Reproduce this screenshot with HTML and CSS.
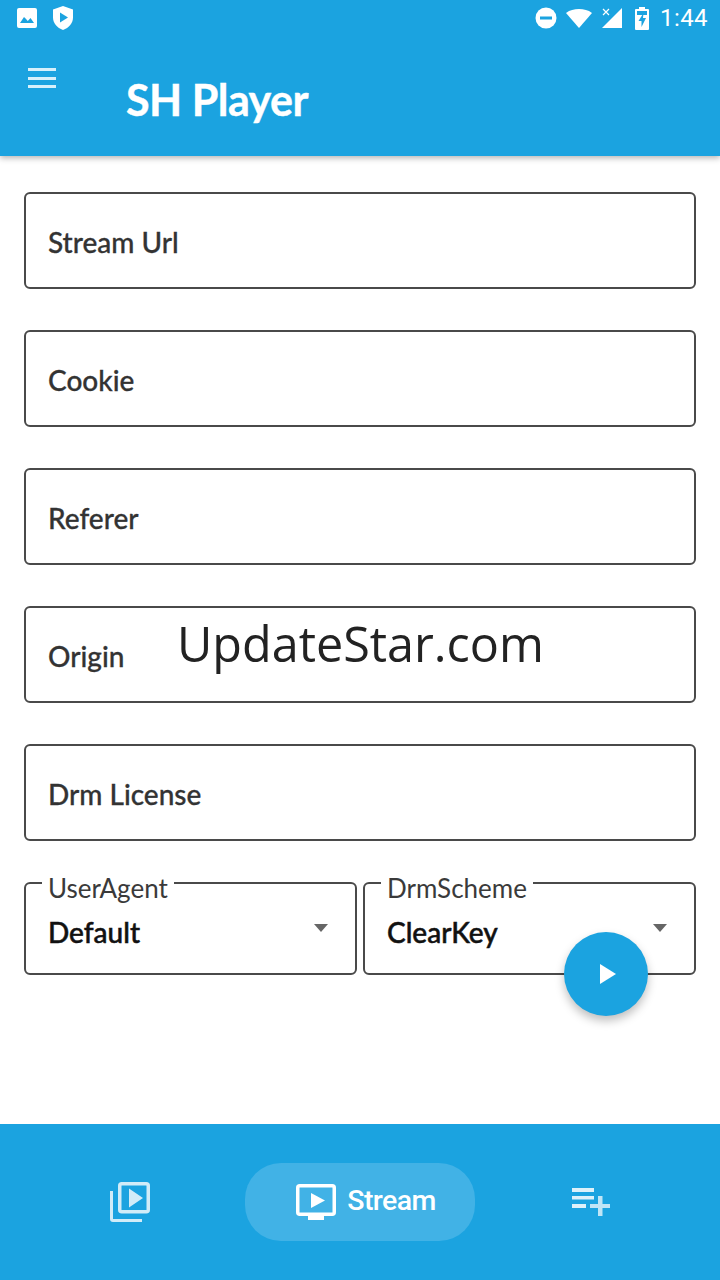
FILE: index.html
```html
<!DOCTYPE html>
<html lang="en">
<head>
<meta charset="utf-8">
<title>SH Player</title>
<link rel="stylesheet" href="styles.css">
</head>
<body>
<div class="app">
  <header class="appbar">
    <div class="status">
      <div class="status-left">
        <svg class="ic" width="20" height="20" viewBox="0 0 20 20"><path fill="#fff" fill-rule="evenodd" d="M2 0h16a2 2 0 0 1 2 2v16a2 2 0 0 1-2 2H2a2 2 0 0 1-2-2V2a2 2 0 0 1 2-2zM3 15h14l-3.500-5-2.700 3-2-2.200L7 9z"/></svg>
        <svg class="ic" width="20" height="24" viewBox="0 0 20 24"><path fill="#fff" d="M10 0l10 3.500v8c0 5.500-4 10.500-10 12.500C4 22 0 17 0 11.500v-8z"/><path fill="#1ba3e0" d="M7 6.500l8 5-8 5z"/></svg>
      </div>
      <div class="status-right">
        <svg width="22" height="22" viewBox="0 0 22 22"><circle cx="11" cy="11" r="10.500" fill="#fff"/><rect x="5" y="9.500" width="12" height="3" fill="#1ba3e0"/></svg>
        <svg class="wifi" width="26" height="19" viewBox="0 0 26 19"><path fill="#fff" d="M13 19L0 4C4 1 8 0 13 0s9 1 13 4z"/></svg>
        <svg class="signal" width="22" height="22" viewBox="0 0 22 22"><path fill="#fff" d="M21 1v20H1z"/><path stroke="#fff" stroke-width="1.200" d="M2 2l6 6M8 2L2 8"/></svg>
        <svg class="battery" width="14" height="23" viewBox="0 0 14 23"><path fill="#fff" d="M4 0h6v2h3a1 1 0 0 1 1 1v19a1 1 0 0 1-1 1H1a1 1 0 0 1-1-1V3a1 1 0 0 1 1-1h3z"/><path fill="#1ba3e0" d="M2 4h10v4H2z"/><path fill="#1ba3e0" d="M8.500 6L3.500 14h3v6l4.500-9H8z"/></svg>
        <span class="clock">1:44</span>
      </div>
    </div>
    <div class="toolbar">
      <div class="menu"><span></span><span></span><span></span></div>
      <h1 class="title">SH Player</h1>
    </div>
  </header>

  <main class="form">
    <div class="field"><span class="field-label">Stream Url</span></div>
    <div class="field"><span class="field-label">Cookie</span></div>
    <div class="field"><span class="field-label">Referer</span></div>
    <div class="field"><span class="field-label">Origin</span></div>
    <div class="field"><span class="field-label">Drm License</span></div>
    <div class="selects">
      <div class="select">
        <span class="legend">UserAgent</span>
        <span class="value">Default</span>
        <i class="caret"></i>
      </div>
      <div class="select">
        <span class="legend">DrmScheme</span>
        <span class="value">ClearKey</span>
        <i class="caret"></i>
      </div>
    </div>
    <div class="watermark">UpdateStar.com</div>
    <button class="fab" aria-label="Play"><svg width="18" height="20" viewBox="0 0 18 20"><path fill="#fff" d="M1 0l16 10-16 10z"/></svg></button>
  </main>

  <nav class="bottom">
    <div class="tab">
      <svg class="dim" width="40" height="40" viewBox="0 0 40 40" fill="none"><path stroke="#fff" stroke-width="3" d="M1.500 9v28a1.500 1.500 0 0 0 1.500 1.500h29"/><rect x="9.750" y="1.750" width="28.500" height="28" rx="2" stroke="#fff" stroke-width="3.500"/><path fill="#fff" d="M19 6.500l14 9.500-14 9.500z"/></svg>
    </div>
    <div class="pill">
      <svg width="40" height="36" viewBox="0 0 40 36" fill="none"><rect x="1.750" y="1.750" width="36.500" height="28.500" rx="2" stroke="#fff" stroke-width="3.500"/><path fill="#fff" d="M15 9l14 7.500-14 7.500z"/><rect x="12" y="31" width="16" height="5" fill="#fff"/></svg>
      <span class="pill-text">Stream</span>
    </div>
    <div class="tab tab-end">
      <svg class="dim2" width="38" height="28" viewBox="0 0 38 28"><path fill="#fff" d="M0 0h22v4H0zM0 8h22v3.500H0zM0 16h14v4H0z"/><path fill="#fff" opacity=".85" d="M26 8h4.500v8H38v4h-7.500v8H26v-8h-8v-4h8z"/></svg>
    </div>
  </nav>
</div>
</body>
</html>
```

FILE: styles.css
```css
* { box-sizing: border-box; }
html, body { margin: 0; padding: 0; }
body { background: #fff; font-family: "Lato", "Liberation Sans", sans-serif; }
.app { width: 720px; height: 1280px; display: flex; flex-direction: column; overflow: hidden; }

.appbar { height: 156px; background: #1ba3e0; color: #fff; box-shadow: 0 2px 6px rgba(0,0,0,.3); position: relative; z-index: 1; }
.status { height: 36px; display: flex; justify-content: space-between; align-items: center; padding: 0 12px 0 17px; }
.status-left { display: flex; align-items: center; gap: 16px; }
.status-right { display: flex; align-items: center; gap: 9px; }
.battery { margin-left: 3px; }
.clock { font-family: Roboto, sans-serif; font-size: 24px; letter-spacing: 0.4px; margin-left: 2px; }

.toolbar { display: flex; align-items: flex-start; padding: 32px 0 0 28px; }
.menu { width: 28px; display: flex; flex-direction: column; gap: 5.500px; }
.menu span { height: 3px; background: #d6f0fb; }
.title { margin: -3px 0 0 70px; font-size: 43px; line-height: 70px; font-weight: 700; letter-spacing: -0.5px; white-space: nowrap; -webkit-text-stroke: 0.4px #fff; }

.form { flex: 1; position: relative; padding: 36px 24px 0; display: flex; flex-direction: column; gap: 41px; }
.field { height: 97px; border: 2px solid #4a4a4a; border-radius: 6px; display: flex; align-items: center; padding: 2px 0 0 22px; }
.field-label { font-size: 28px; font-weight: 500; color: #333; -webkit-text-stroke: 0.3px #333; }

.selects { display: flex; gap: 6px; }
.select { flex: 1; height: 93px; border: 2px solid #4a4a4a; border-radius: 6px; position: relative; padding: 26px 22px 0; }
.legend { position: absolute; top: -11px; left: 16px; padding: 0 6px; background: #fff; font-size: 26px; line-height: 30px; color: #3a3a3a; }
.value { font-size: 28px; font-weight: 500; line-height: 44px; color: #111; -webkit-text-stroke: 0.5px #111; }
.caret { position: absolute; top: 40px; right: 27px; border-left: 7.500px solid transparent; border-right: 7.500px solid transparent; border-top: 8px solid #666; }

.watermark { position: absolute; left: 177px; top: 454px; font-family: "Open Sans", sans-serif; font-size: 48.500px; line-height: 66px; color: #222; }
.fab { position: absolute; left: 564px; top: 776px; width: 84px; height: 84px; border: 0; border-radius: 50%; background: #1ba3e0; display: flex; align-items: center; justify-content: center; padding: 0 0 0 4px; box-shadow: 0 5px 10px rgba(0,0,0,.25); }

.bottom { height: 156px; background: #1ba3e0; display: flex; align-items: center; justify-content: center; }
.tab { width: 230px; display: flex; justify-content: center; }
.tab-end { padding-left: 2px; }
.pill { width: 230px; height: 78px; border-radius: 36px; background: #41b2e6; display: flex; align-items: center; justify-content: center; gap: 11px; padding-left: 12px; color: #fff; }
.pill-text { font-family: Roboto, sans-serif; font-size: 28.500px; font-weight: 500; line-height: 34px; margin-top: -2px; letter-spacing: -0.6px; }
.dim { opacity: .8; }
.dim2 { opacity: .85; }
```
